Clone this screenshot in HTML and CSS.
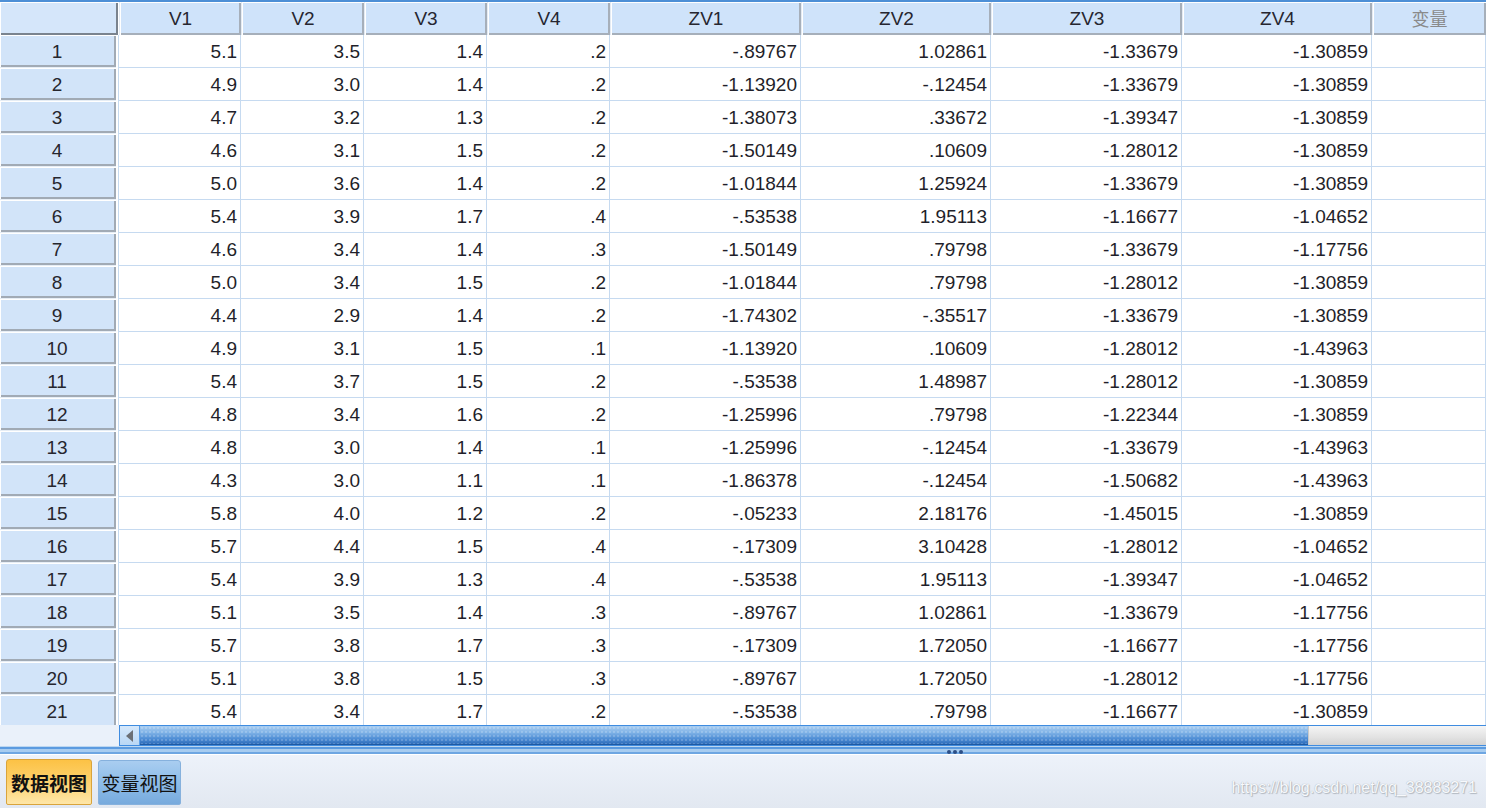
FILE: index.html
```html
<!DOCTYPE html>
<html lang="zh">
<head>
<meta charset="utf-8">
<title>数据视图</title>
<link rel="stylesheet" href="styles.css">
</head>
<body>
<div class="app">
  <div class="view">
    <div class="topline"></div>
    <div class="sheet">
      <div class="corner"></div>
      <div class="h">V1</div><div class="h">V2</div><div class="h">V3</div><div class="h">V4</div>
      <div class="h">ZV1</div><div class="h">ZV2</div><div class="h">ZV3</div><div class="h">ZV4</div>
      <div class="h h-var">变量</div>

      <div class="r">1</div><div class="c">5.1</div><div class="c">3.5</div><div class="c">1.4</div><div class="c">.2</div><div class="c">-.89767</div><div class="c">1.02861</div><div class="c">-1.33679</div><div class="c">-1.30859</div><div class="c"></div>
      <div class="r">2</div><div class="c">4.9</div><div class="c">3.0</div><div class="c">1.4</div><div class="c">.2</div><div class="c">-1.13920</div><div class="c">-.12454</div><div class="c">-1.33679</div><div class="c">-1.30859</div><div class="c"></div>
      <div class="r">3</div><div class="c">4.7</div><div class="c">3.2</div><div class="c">1.3</div><div class="c">.2</div><div class="c">-1.38073</div><div class="c">.33672</div><div class="c">-1.39347</div><div class="c">-1.30859</div><div class="c"></div>
      <div class="r">4</div><div class="c">4.6</div><div class="c">3.1</div><div class="c">1.5</div><div class="c">.2</div><div class="c">-1.50149</div><div class="c">.10609</div><div class="c">-1.28012</div><div class="c">-1.30859</div><div class="c"></div>
      <div class="r">5</div><div class="c">5.0</div><div class="c">3.6</div><div class="c">1.4</div><div class="c">.2</div><div class="c">-1.01844</div><div class="c">1.25924</div><div class="c">-1.33679</div><div class="c">-1.30859</div><div class="c"></div>
      <div class="r">6</div><div class="c">5.4</div><div class="c">3.9</div><div class="c">1.7</div><div class="c">.4</div><div class="c">-.53538</div><div class="c">1.95113</div><div class="c">-1.16677</div><div class="c">-1.04652</div><div class="c"></div>
      <div class="r">7</div><div class="c">4.6</div><div class="c">3.4</div><div class="c">1.4</div><div class="c">.3</div><div class="c">-1.50149</div><div class="c">.79798</div><div class="c">-1.33679</div><div class="c">-1.17756</div><div class="c"></div>
      <div class="r">8</div><div class="c">5.0</div><div class="c">3.4</div><div class="c">1.5</div><div class="c">.2</div><div class="c">-1.01844</div><div class="c">.79798</div><div class="c">-1.28012</div><div class="c">-1.30859</div><div class="c"></div>
      <div class="r">9</div><div class="c">4.4</div><div class="c">2.9</div><div class="c">1.4</div><div class="c">.2</div><div class="c">-1.74302</div><div class="c">-.35517</div><div class="c">-1.33679</div><div class="c">-1.30859</div><div class="c"></div>
      <div class="r">10</div><div class="c">4.9</div><div class="c">3.1</div><div class="c">1.5</div><div class="c">.1</div><div class="c">-1.13920</div><div class="c">.10609</div><div class="c">-1.28012</div><div class="c">-1.43963</div><div class="c"></div>
      <div class="r">11</div><div class="c">5.4</div><div class="c">3.7</div><div class="c">1.5</div><div class="c">.2</div><div class="c">-.53538</div><div class="c">1.48987</div><div class="c">-1.28012</div><div class="c">-1.30859</div><div class="c"></div>
      <div class="r">12</div><div class="c">4.8</div><div class="c">3.4</div><div class="c">1.6</div><div class="c">.2</div><div class="c">-1.25996</div><div class="c">.79798</div><div class="c">-1.22344</div><div class="c">-1.30859</div><div class="c"></div>
      <div class="r">13</div><div class="c">4.8</div><div class="c">3.0</div><div class="c">1.4</div><div class="c">.1</div><div class="c">-1.25996</div><div class="c">-.12454</div><div class="c">-1.33679</div><div class="c">-1.43963</div><div class="c"></div>
      <div class="r">14</div><div class="c">4.3</div><div class="c">3.0</div><div class="c">1.1</div><div class="c">.1</div><div class="c">-1.86378</div><div class="c">-.12454</div><div class="c">-1.50682</div><div class="c">-1.43963</div><div class="c"></div>
      <div class="r">15</div><div class="c">5.8</div><div class="c">4.0</div><div class="c">1.2</div><div class="c">.2</div><div class="c">-.05233</div><div class="c">2.18176</div><div class="c">-1.45015</div><div class="c">-1.30859</div><div class="c"></div>
      <div class="r">16</div><div class="c">5.7</div><div class="c">4.4</div><div class="c">1.5</div><div class="c">.4</div><div class="c">-.17309</div><div class="c">3.10428</div><div class="c">-1.28012</div><div class="c">-1.04652</div><div class="c"></div>
      <div class="r">17</div><div class="c">5.4</div><div class="c">3.9</div><div class="c">1.3</div><div class="c">.4</div><div class="c">-.53538</div><div class="c">1.95113</div><div class="c">-1.39347</div><div class="c">-1.04652</div><div class="c"></div>
      <div class="r">18</div><div class="c">5.1</div><div class="c">3.5</div><div class="c">1.4</div><div class="c">.3</div><div class="c">-.89767</div><div class="c">1.02861</div><div class="c">-1.33679</div><div class="c">-1.17756</div><div class="c"></div>
      <div class="r">19</div><div class="c">5.7</div><div class="c">3.8</div><div class="c">1.7</div><div class="c">.3</div><div class="c">-.17309</div><div class="c">1.72050</div><div class="c">-1.16677</div><div class="c">-1.17756</div><div class="c"></div>
      <div class="r">20</div><div class="c">5.1</div><div class="c">3.8</div><div class="c">1.5</div><div class="c">.3</div><div class="c">-.89767</div><div class="c">1.72050</div><div class="c">-1.28012</div><div class="c">-1.17756</div><div class="c"></div>
      <div class="r">21</div><div class="c">5.4</div><div class="c">3.4</div><div class="c">1.7</div><div class="c">.2</div><div class="c">-.53538</div><div class="c">.79798</div><div class="c">-1.16677</div><div class="c">-1.30859</div><div class="c"></div>
    </div>
  </div>

  <div class="hscroll">
    <div class="hs-blank"></div>
    <div class="hs-bar">
      <div class="hs-btn">
        <svg width="8" height="12" viewBox="0 0 8 12"><polygon points="7,0 7,12 0,6" fill="#6b6f75"/></svg>
      </div>
      <div class="hs-thumb"></div>
      <div class="hs-track"></div>
    </div>
  </div>

  <div class="splitter">
    <span class="grip"><i></i><i></i><i></i></span>
  </div>

  <div class="tabs">
    <div class="tab tab-on">数据视图</div>
    <div class="tab tab-off">变量视图</div>
    <span class="wm">https://blog.csdn.net/qq_38883271</span>
  </div>
</div>
</body>
</html>
```

FILE: styles.css
```css
html, body {
  margin: 0;
  padding: 0;
}
body {
  width: 1486px;
  height: 808px;
  overflow: hidden;
  background: #ffffff;
  font-family: "Liberation Sans", Arial, "Noto Sans CJK SC", sans-serif;
  color: #1f1f2a;
}
.app {
  display: flex;
  flex-direction: column;
  width: 1486px;
  height: 808px;
  position: relative;
}
.view {
  height: 725px;
  overflow: hidden;
  flex: none;
  background: #fff;
}
.topline {
  height: 2px;
  background: #4d8fd6;
}
.sheet {
  display: grid;
  grid-template-columns: 119px 122px 123px 123px 123px 191px 190px 191px 190px 114px;
  grid-auto-rows: 33px;
}
.corner {
  background: #d5e6fa;
  margin-right: 1px;
  box-shadow: inset 1px 1px 0 #ffffff, inset -2px -2px 0 #7a838e;
}
.h {
  background: #cfe3fa;
  border-left: 1px solid #e4ebf3;
  box-shadow: inset 1px 1px 0 #ffffff, inset -2px -2px 0 #a6afba;
  text-align: center;
  font-size: 19px;
  line-height: 34px;
  color: #262630;
}
.h-var {
  color: #8a8a8a;
  font-family: "Noto Sans CJK SC", "Liberation Sans", sans-serif;
  font-size: 18px;
  line-height: 32px;
}
.r {
  margin-right: 3px;
  padding-right: 2px;
  background: #d2e4f9;
  box-shadow: inset 1px 1px 0 #ffffff, inset -2px -2px 0 #a1aab5, 2px 0 0 #ffffff, 3px 0 0 #c6daf0;
  border-bottom: 1px solid #e6edf5;
  text-align: center;
  font-size: 19px;
  line-height: 34px;
  color: #26262e;
  box-sizing: border-box;
}
.c {
  background: #ffffff;
  border-right: 1px solid #c6daf0;
  border-bottom: 1px solid #c6daf0;
  text-align: right;
  padding-right: 3px;
  font-size: 19px;
  line-height: 34px;
  white-space: nowrap;
  overflow: hidden;
}

/* horizontal scrollbar */
.hscroll {
  height: 21px;
  display: flex;
  flex: none;
}
.hs-blank {
  width: 119px;
  flex: none;
  background: #eaf1fa;
}
.hs-bar {
  flex: 1;
  display: flex;
  border: 1px solid #3f8ce0;
  border-right: none;
  box-sizing: border-box;
  background: #dcdcdc;
}
.hs-btn {
  width: 20px;
  flex: none;
  display: flex;
  align-items: center;
  justify-content: center;
  background: linear-gradient(#d5e8fb, #b9d7f5);
  border-right: 1px solid #5a9ee6;
  box-sizing: border-box;
}
.hs-thumb {
  width: 1168px;
  flex: none;
  background:
    radial-gradient(circle, rgba(255,255,255,0.18) 0.8px, transparent 1.2px) 0 0 / 4px 4px,
    linear-gradient(#a9cdf0 0%, #7fb2e6 35%, #4a8ad3 70%, #2a68b6 100%);
  box-shadow: inset 0 -1px 0 #1f5aa3;
}
.hs-track {
  flex: 1;
  background: linear-gradient(#f5f5f5, #e2e2e2 60%, #d2d2d2);
  border-left: 1px solid #c9c9c9;
}

/* splitter */
.splitter {
  height: 9px;
  flex: none;
  box-sizing: border-box;
  border-top: 1px solid #bcd7f1;
  background: linear-gradient(#5b9be0 0px, #5b9be0 2px, #a7ccf0 2px, #a7ccf0 5px, #6ea6e2 5px, #6ea6e2 7px, #ffffff 7px);
  display: flex;
  align-items: flex-start;
  padding-left: 947px;
  padding-top: 3px;
}
.grip {
  display: flex;
  gap: 2px;
}
.grip i {
  display: block;
  width: 4px;
  height: 4px;
  border-radius: 50%;
  background: #2c4f86;
}

/* tabs */
.tabs {
  flex: 1;
  display: flex;
  align-items: flex-start;
  gap: 6px;
  padding: 4px 0 0 6px;
  background: linear-gradient(#edf2fa, #e2e8f1);
  position: relative;
}
.tab {
  height: 46px;
  box-sizing: border-box;
  display: flex;
  align-items: center;
  justify-content: center;
  font-family: "Noto Sans CJK SC", "Liberation Sans", sans-serif;
  font-size: 19px;
  color: #111;
  border-radius: 3px 3px 2px 2px;
}
.tab-on {
  width: 86px;
  font-weight: bold;
  background: linear-gradient(#fcc245, #fdd06a 45%, #fee6a8);
  border: 1px solid #d9a43c;
}
.tab-off {
  width: 83px;
  margin-top: 1px;
  height: 45px;
  background: linear-gradient(#a9cdf0, #8ebde9 50%, #77aadd);
  border: 1px solid #86b1dd;
}
.wm {
  position: absolute;
  right: 9px;
  top: 24px;
  font-family: "Liberation Sans", Arial, sans-serif;
  font-size: 16px;
  color: #f7f9fc;
  text-shadow: 0 0 1px #9aa1aa, 1px 1px 1px #b4bac2;
}
```
